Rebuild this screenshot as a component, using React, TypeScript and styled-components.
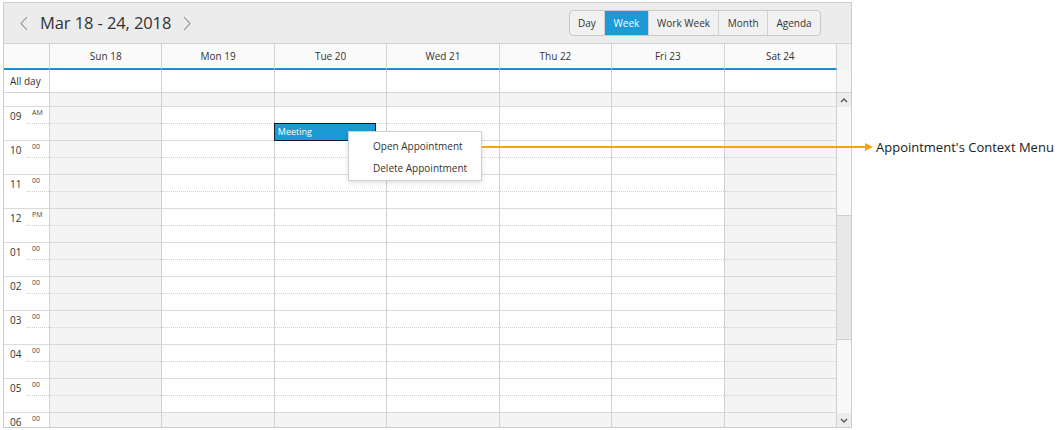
import React from 'react';
import styled, {createGlobalStyle} from 'styled-components';

const GlobalStyle = createGlobalStyle`
  body {
    margin: 0;
    background: #fff;
    font-family: "Open Sans", "Noto Sans", sans-serif;
    color: #333;
  }
`;

const DAYS = ['Sun 18', 'Mon 19', 'Tue 20', 'Wed 21', 'Thu 22', 'Fri 23', 'Sat 24'];
const VIEWS = ['Day', 'Week', 'Work Week', 'Month', 'Agenda'];
const HOURS = [
    {h: '09', m: 'AM'}, {h: '10', m: '00'}, {h: '11', m: '00'}, {h: '12', m: 'PM'},
    {h: '01', m: '00'}, {h: '02', m: '00'}, {h: '03', m: '00'}, {h: '04', m: '00'},
    {h: '05', m: '00'}, {h: '06', m: '00'},
];
// 9am..5pm are working hours, 6pm is not
const WORK_HOURS = 9;
const COLS = '46px repeat(7, 1fr) 14px';

const Page = styled.div`
  position: relative;
  width: 1060px;
  height: 430px;
  padding: 2px 0 0 3px;
  box-sizing: border-box;
`;

const Scheduler = styled.div`
  width: 849px;
  height: 426px;
  border: 1px solid #cdcdcd;
  box-sizing: border-box;
  display: flex;
  flex-direction: column;
  background: #fff;
`;

const Toolbar = styled.div`
  height: 41px;
  flex: none;
  box-sizing: border-box;
  border-bottom: 1px solid #d4d4d4;
  background: #ececec;
  display: flex;
  align-items: center;
  padding-left: 16px;
`;

const NavArrow = styled.svg`
  width: 8px;
  height: 15px;
  flex: none;
`;

const DateTitle = styled.div`
  font-size: 16.5px;
  color: #333;
  margin: 0 12px 2px 12px;
  letter-spacing: -0.1px;
`;

const ViewGroup = styled.div`
  margin-left: auto;
  margin-right: 30px;
  height: 26px;
  box-sizing: border-box;
  display: flex;
  border: 1px solid #c9c9c9;
  border-radius: 4px;
  background: #f1f1f1;
  overflow: hidden;
`;

const ViewButton = styled.div<{$active?: boolean}>`
  display: flex;
  align-items: center;
  padding: 0 8.4px;
  font-size: 10px;
  color: ${p => (p.$active ? '#fff' : '#333')};
  background: ${p => (p.$active ? '#1b9ad6' : 'transparent')};
  border-left: 1px solid #d3d3d3;
  &:first-child {
    border-left: none;
  }
`;

const HeadRow = styled.div`
  display: grid;
  grid-template-columns: ${COLS};
  height: 26px;
  flex: none;
`;

const HeadCell = styled.div<{$gutter?: boolean}>`
  box-sizing: border-box;
  border-right: ${p => (p.$gutter ? 'none' : '1px solid #d3d3d3')};
  border-bottom: 2px solid ${p => (p.$gutter ? '#f3f3f3' : '#1a8fd1')};
  background: ${p => (p.$gutter ? '#f3f3f3' : '#fafafa')};
  font-size: 10px;
  color: #333;
  display: flex;
  align-items: center;
  justify-content: center;
  padding-bottom: 1px;
`;

const AllDayRow = styled.div`
  display: grid;
  grid-template-columns: ${COLS};
  height: 23px;
  flex: none;
`;

const AllDayCell = styled.div<{$gutter?: boolean}>`
  box-sizing: border-box;
  border-right: ${p => (p.$gutter ? 'none' : '1px solid #d3d3d3')};
  border-bottom: 1px solid #d3d3d3;
  background: ${p => (p.$gutter ? '#f7f7f7' : '#fff')};
  font-size: 10px;
  color: #333;
  display: flex;
  align-items: center;
  padding-left: 6px;
`;

const Body = styled.div`
  flex: 1;
  display: flex;
  overflow: hidden;
`;

const Canvas = styled.div`
  flex: 1;
  display: grid;
  grid-template-columns: 46px repeat(7, 1fr);
  overflow: hidden;
`;

const TimeCol = styled.div`
  display: flex;
  flex-direction: column;
  border-right: 1px solid #d3d3d3;
`;

const TimeStub = styled.div`
  height: 14px;
  flex: none;
  box-sizing: border-box;
  border-bottom: 1px solid #dadada;
`;

const HourRow = styled.div`
  height: 34px;
  flex: none;
  box-sizing: border-box;
  border-bottom: 1px solid #dadada;
  display: flex;
`;

const HourNum = styled.div`
  width: 23px;
  box-sizing: border-box;
  padding: 3px 0 0 6px;
  font-size: 10px;
  line-height: 12px;
  color: #333;
`;

const MinuteCol = styled.div`
  flex: 1;
`;

const MinuteTop = styled.div`
  height: 17px;
  box-sizing: border-box;
  border-bottom: 1px dotted #cfcfcf;
  padding: 2px 0 0 5px;
  font-size: 7px;
  line-height: 8px;
  color: #444;
`;

const DayCol = styled.div<{$weekend?: boolean}>`
  position: relative;
  display: flex;
  flex-direction: column;
  border-right: 1px solid #d0d0d0;
  background: ${p => (p.$weekend ? '#f4f4f4' : '#fff')};
`;

const Slot = styled.div<{$half: 'top' | 'bottom' | 'stub'; $off?: boolean}>`
  height: ${p => (p.$half === 'stub' ? 14 : 17)}px;
  flex: none;
  box-sizing: border-box;
  background: ${p => (p.$off ? '#f4f4f4' : 'transparent')};
  border-bottom: ${p => (p.$half === 'top' ? '1px dotted #d2d2d2' : '1px solid #dadada')};
`;

const Appointment = styled.div`
  position: absolute;
  top: 30px;
  left: -1px;
  width: 102px;
  height: 18px;
  box-sizing: border-box;
  background: #1b9ad6;
  border: 1px solid #1a1a1a;
  color: #fff;
  font-size: 9px;
  line-height: 15px;
  padding-left: 3px;
`;

const ScrollBar = styled.div`
  width: 14px;
  flex: none;
  display: flex;
  flex-direction: column;
  background: #f8f8f8;
`;

const ScrollButton = styled.div`
  height: 14px;
  flex: none;
  background: #ededed;
  display: flex;
  align-items: center;
  justify-content: center;
`;

const Track = styled.div`
  flex: 1;
  padding-top: 108px;
`;

const Thumb = styled.div`
  height: 125px;
  box-sizing: border-box;
  background: #e8e8e8;
  border-top: 1px solid #cfcfcf;
  border-bottom: 1px solid #cfcfcf;
`;

const ContextMenu = styled.div`
  position: absolute;
  left: 348px;
  top: 131px;
  width: 134px;
  box-sizing: border-box;
  padding: 3px 0 1px;
  background: #fff;
  border: 1px solid #d0d0d0;
  box-shadow: 0 2px 5px rgba(0, 0, 0, 0.12);
`;

const MenuItem = styled.div`
  height: 22px;
  line-height: 22px;
  padding-left: 24px;
  font-size: 10px;
  color: #333;
  white-space: nowrap;
`;

const Callout = styled.div`
  position: absolute;
  left: 482px;
  top: 141px;
  height: 11px;
  display: flex;
  align-items: center;
`;

const CalloutLine = styled.div`
  width: 383px;
  height: 2px;
  background: #f5a11c;
`;

const CalloutHead = styled.div`
  width: 0;
  height: 0;
  border-left: 8px solid #f5a11c;
  border-top: 4px solid transparent;
  border-bottom: 4px solid transparent;
`;

const CalloutLabel = styled.div`
  margin-left: 3px;
  font-size: 13px;
  color: #1a1a1a;
  white-space: nowrap;
`;

const Chevron: React.FC<{dir: 'up' | 'down'}> = ({dir}) => (
    <svg width="8" height="5" viewBox="0 0 8 5">
        <polyline
            points={dir === 'up' ? '1,4 4,1 7,4' : '1,1 4,4 7,1'}
            fill="none"
            stroke="#555"
            strokeWidth="1.4"
        />
    </svg>
);

const App: React.FC = () => {
    return (
        <Page>
            <GlobalStyle/>
            <Scheduler>
                <Toolbar>
                    <NavArrow viewBox="0 0 8 15">
                        <polyline points="7,1 1,7.5 7,14" fill="none" stroke="#8c8c8c" strokeWidth="1.1"/>
                    </NavArrow>
                    <DateTitle>Mar 18 - 24, 2018</DateTitle>
                    <NavArrow viewBox="0 0 8 15">
                        <polyline points="1,1 7,7.5 1,14" fill="none" stroke="#8c8c8c" strokeWidth="1.1"/>
                    </NavArrow>
                    <ViewGroup>
                        {VIEWS.map(v => (
                            <ViewButton key={v} $active={v === 'Week'}>{v}</ViewButton>
                        ))}
                    </ViewGroup>
                </Toolbar>

                <HeadRow>
                    <HeadCell/>
                    {DAYS.map(d => <HeadCell key={d}>{d}</HeadCell>)}
                    <HeadCell $gutter/>
                </HeadRow>

                <AllDayRow>
                    <AllDayCell>All day</AllDayCell>
                    {DAYS.map(d => <AllDayCell key={d}/>)}
                    <AllDayCell $gutter/>
                </AllDayRow>

                <Body>
                    <Canvas>
                        <TimeCol>
                            <TimeStub/>
                            {HOURS.map(t => (
                                <HourRow key={t.h}>
                                    <HourNum>{t.h}</HourNum>
                                    <MinuteCol>
                                        <MinuteTop>{t.m}</MinuteTop>
                                    </MinuteCol>
                                </HourRow>
                            ))}
                        </TimeCol>
                        {DAYS.map((d, i) => {
                            const weekend = i === 0 || i === 6;
                            return (
                                <DayCol key={d} $weekend={weekend}>
                                    <Slot $half="stub" $off/>
                                    {HOURS.map((t, hi) => {
                                        const off = !weekend && hi >= WORK_HOURS;
                                        return (
                                            <React.Fragment key={t.h}>
                                                <Slot $half="top" $off={off}/>
                                                <Slot $half="bottom" $off={off}/>
                                            </React.Fragment>
                                        );
                                    })}
                                    {d === 'Tue 20' && <Appointment>Meeting</Appointment>}
                                </DayCol>
                            );
                        })}
                    </Canvas>
                    <ScrollBar>
                        <ScrollButton><Chevron dir="up"/></ScrollButton>
                        <Track><Thumb/></Track>
                        <ScrollButton><Chevron dir="down"/></ScrollButton>
                    </ScrollBar>
                </Body>
            </Scheduler>

            <ContextMenu>
                <MenuItem>Open Appointment</MenuItem>
                <MenuItem>Delete Appointment</MenuItem>
            </ContextMenu>

            <Callout>
                <CalloutLine/>
                <CalloutHead/>
                <CalloutLabel>Appointment&apos;s Context Menu</CalloutLabel>
            </Callout>
        </Page>
    );
};

export default App;
